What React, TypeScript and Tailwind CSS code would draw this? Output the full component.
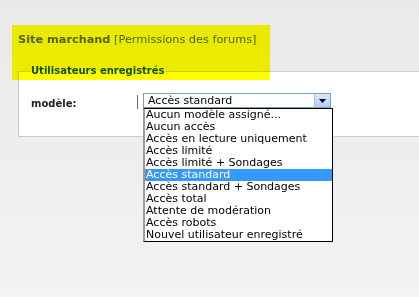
const options = [
  "Aucun modèle assigné...",
  "Aucun accès",
  "Accès en lecture uniquement",
  "Accès limité",
  "Accès limité + Sondages",
  "Accès standard",
  "Accès standard + Sondages",
  "Accès total",
  "Attente de modération",
  "Accès robots",
  "Nouvel utilisateur enregistré",
];

const selected = "Accès standard";

const ComboArrow = () => (
  <div className="absolute right-0 top-0 h-full w-[16px] flex items-center justify-center bg-linear-to-b from-[#dbe8fc] to-[#b3cdf4] border-l border-[#a9c1e8]">
    <svg width="7" height="4" viewBox="0 0 7 4">
      <path d="M0 0 H7 L3.5 4 Z" fill="#000" />
    </svg>
  </div>
);

export default function App() {
  return (
    <div className="relative w-[419px] h-[297px] overflow-hidden bg-linear-to-b from-[#e9e9e9] to-[#f3f3f3] pt-[32px] font-['DejaVu_Sans',sans-serif]">
      <h1 className="pl-[18px] text-[11.3px] leading-[16px] text-[#536482]">
        <span className="font-bold">Site marchand</span> [Permissions des forums]
      </h1>

      <fieldset className="mt-[16px] ml-[18px] border-t border-l border-b border-[#cccccc] bg-white pl-[12px] pt-[15px] pb-[26px]">
        <legend className="text-[10px] leading-[14px] font-bold text-[#115098]">
          Utilisateurs enregistrés
        </legend>
        <div className="flex items-start">
          <label className="w-[106px] mt-[5px] text-[10px] leading-[12px] font-bold text-[#222]">
            modèle:
          </label>
          <div className="w-px h-[14px] mt-[2px] bg-[#666]" />
          <div className="relative ml-[5px] w-[188px] h-[15px] border border-[#7f9db9] bg-white">
            <div className="pl-[4px] text-[11px] leading-[13px] text-black">{selected}</div>
            <ComboArrow />
            <ul className="absolute left-[-1px] top-[14px] w-[190px] border border-black border-l-2 border-l-[#9a9a9a] bg-white z-10">
              {options.map((opt) => (
                <li
                  key={opt}
                  className={
                    opt === selected
                      ? "h-[12px] pl-px text-[11px] leading-[12px] whitespace-nowrap bg-[#3399ff] text-white"
                      : "h-[12px] pl-px text-[11px] leading-[12px] whitespace-nowrap text-black"
                  }
                >
                  {opt}
                </li>
              ))}
            </ul>
          </div>
        </div>
      </fieldset>

      {/* highlighter mark over the heading */}
      <div className="pointer-events-none absolute left-[12px] top-[25px] w-[258px] h-[55px] bg-[#ffff00] mix-blend-multiply z-20" />
    </div>
  );
}
